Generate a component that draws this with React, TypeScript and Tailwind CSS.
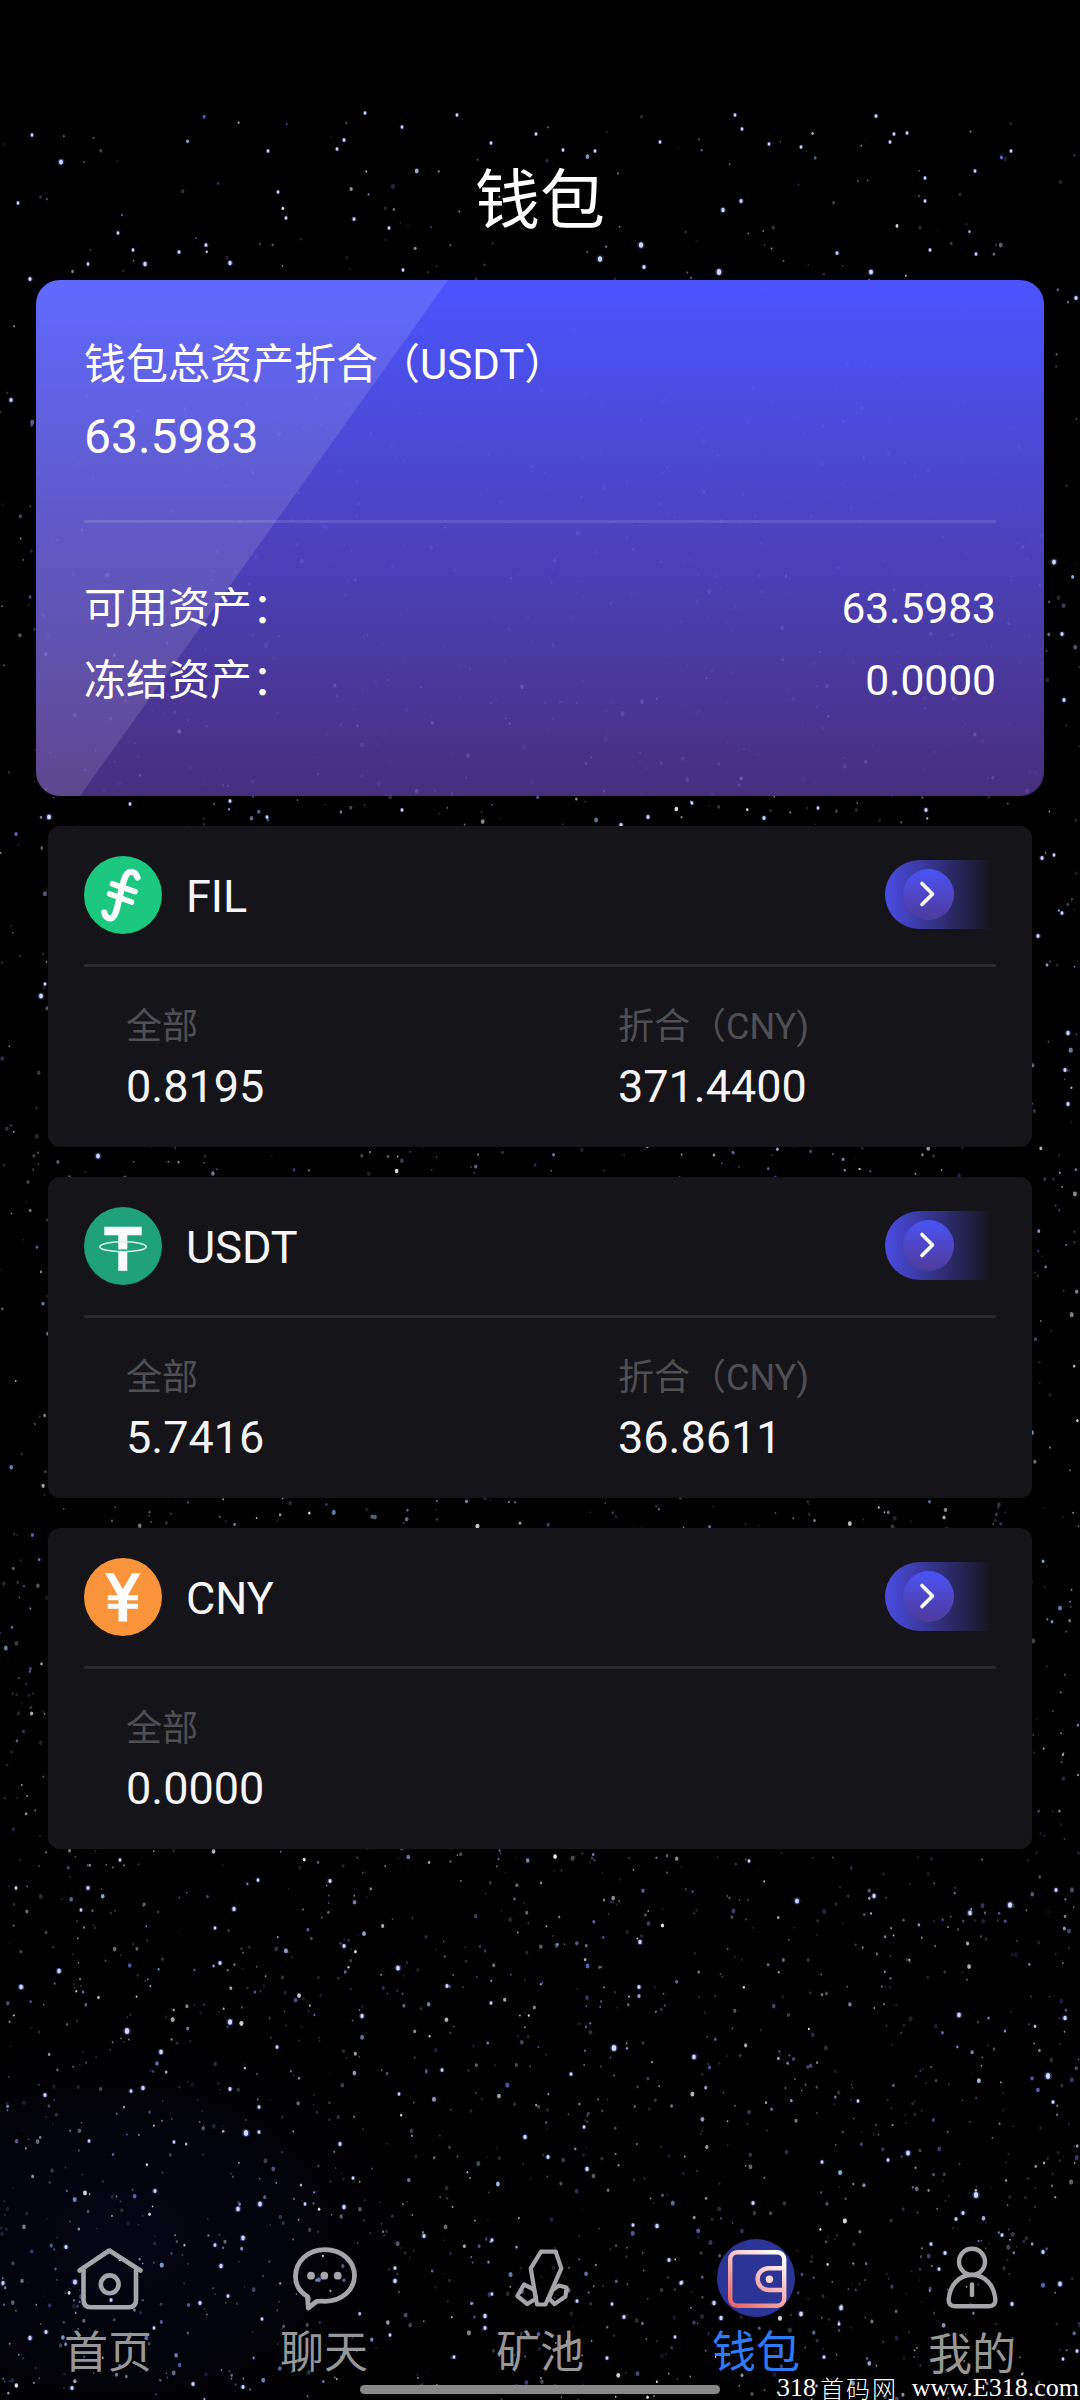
import type { ReactNode } from "react";
import { clsx } from "clsx";

interface Coin {
  id: string;
  icon: ReactNode;
  total: string;
  converted?: string;
}

interface Tab {
  label: string;
  icon: ReactNode;
  active?: boolean;
  labelClass?: string;
}

/* ---------- Star field ---------- */

// Hand-placed bright stars: x, y, radius
const BRIGHT_STARS: [number, number, number][] = [
  [61, 162, 3], [365, 113, 2], [457, 115, 2], [402, 127, 2], [344, 140, 2.2], [536, 134, 2],
  [268, 151, 2], [337, 149, 2], [491, 143, 2], [563, 150, 2], [595, 151, 2], [660, 142, 2],
  [735, 115, 2], [742, 129, 2], [769, 144, 2], [801, 147, 2], [894, 134, 2], [907, 133, 2],
  [890, 142, 2], [876, 116, 2.2], [1011, 151, 2], [925, 178, 2], [925, 201, 2], [975, 171, 2],
  [741, 201, 2.4], [723, 210, 2.6], [641, 245, 3.2], [600, 259, 3.2], [719, 272, 3.4], [871, 272, 3],
  [644, 267, 2.4], [837, 253, 2.2], [976, 254, 2], [930, 250, 2], [179, 252, 2.2], [145, 264, 2.6],
  [206, 245, 2.2], [230, 263, 2.6], [133, 250, 2], [403, 270, 2], [354, 219, 2.2], [389, 228, 2],
  [286, 218, 2], [278, 192, 2], [18, 203, 2], [32, 135, 2], [88, 264, 2], [118, 233, 2],
  [30, 279, 2.4], [1076, 298, 2.4], [11, 400, 2.4], [1054, 562, 3], [1062, 634, 2.4], [1064, 700, 2.4],
  [49, 817, 3], [267, 817, 2], [402, 810, 2], [621, 825, 2.4], [648, 817, 2.4], [764, 818, 2.4],
  [230, 801, 2.2], [130, 804, 2], [692, 803, 2], [926, 810, 2.4], [818, 808, 2],
  [1042, 858, 2.4], [1054, 855, 2], [1038, 936, 2.4], [1062, 913, 2.2], [1068, 1033, 2.6],
  [1065, 1070, 2.4], [1068, 1104, 2.4], [41, 996, 3], [45, 984, 2], [98, 1156, 3],
  [120, 1860, 2], [330, 1881, 2.4], [258, 1880, 2.2], [88, 1888, 2.4], [16, 1888, 2], [749, 1861, 2],
  [797, 1901, 3], [874, 1896, 2.6], [1010, 1905, 3.2], [970, 1913, 2.8], [1056, 1890, 2.4],
  [234, 1909, 2.6], [81, 1910, 2], [215, 1928, 2], [344, 1946, 2.4], [398, 1968, 3], [220, 1963, 2.4],
  [59, 1971, 2.8], [21, 1987, 2.8], [447, 1986, 2.4], [640, 1942, 2.6], [639, 1987, 2.4],
  [230, 2022, 3.2], [127, 2031, 3.4], [362, 2016, 2.6], [491, 2003, 2], [959, 2015, 2.8],
  [1065, 2018, 2.6], [614, 2048, 3.6], [694, 2057, 2.8], [161, 2052, 2.8], [277, 2047, 2.2],
  [1048, 2076, 3.4], [442, 2070, 2.2], [571, 2074, 2.2], [143, 2088, 2.6], [131, 2091, 2.2],
  [230, 2089, 2.4], [45, 2095, 2.4], [399, 2094, 2], [858, 2101, 2], [1053, 2102, 2.2],
  [259, 2107, 2.2], [246, 2133, 3.4], [259, 2132, 2.2], [525, 2137, 2.6], [584, 2127, 2],
  [89, 2141, 2], [174, 2142, 2], [340, 2144, 2.4], [548, 2157, 2.4], [908, 2153, 3],
  [587, 2169, 2.6], [888, 2160, 2.2], [822, 2162, 2.2], [353, 2178, 2], [155, 2191, 2.4],
  [238, 2209, 2.8], [260, 2204, 3], [344, 2207, 2.6], [976, 2195, 3.4], [753, 2203, 2.4],
  [305, 2204, 2], [963, 2213, 2.4], [633, 2225, 2.2], [956, 2219, 2.2], [243, 2238, 2.8],
  [424, 2236, 2.4], [492, 2240, 2.2], [66, 2247, 2.4],
  [3, 2283, 2.4], [75, 2282, 3], [215, 2245, 2.2], [221, 2266, 2.6],
  [200, 2303, 2.4], [228, 2296, 2.2], [30, 2338, 2.6], [46, 2332, 2.4], [111, 2300, 2.2],
  [72, 2388, 2.4], [193, 2384, 2.4], [243, 2387, 2.4], [154, 2328, 2], [390, 2335, 2],
  [395, 2281, 2.6], [395, 2268, 2.2], [262, 2319, 2], [485, 2316, 2.6], [485, 2328, 2.4],
  [492, 2294, 2], [454, 2357, 2.2], [624, 2317, 2.4], [612, 2304, 2], [577, 2301, 2.2],
  [681, 2283, 2.4], [714, 2303, 2.6], [721, 2318, 2.6], [607, 2358, 2.2], [675, 2337, 2],
  [657, 2226, 2.6], [669, 2260, 2.4], [841, 2308, 2.8], [801, 2314, 2.8], [931, 2244, 2.2],
  [945, 2253, 2.4], [1060, 2284, 2.8], [1043, 2252, 2.4], [1002, 2235, 2.2], [1012, 2304, 2.4],
  [824, 2357, 2.2], [839, 2324, 2], [1077, 2351, 2.2], [939, 2269, 2.2], [1063, 2359, 2],
];

const STAR_TINTS = ["#ffffff", "#b9c6ff", "#8fa4f0", "#9cc9ff", "#c9c9d6", "#6a6fd8"];

// Small deterministic generator so the sky is the same on every render
const makeRandom = (seed: number) => () => {
  seed = (seed * 1664525 + 1013904223) % 4294967296;
  return seed / 4294967296;
};

const random = makeRandom(318);

const DUST = Array.from({ length: 4400 }, () => {
  const depth = random();
  return {
    x: random() * 1080,
    y: 112 + Math.pow(depth, 0.72) * 2288,
    r: 0.8 + Math.pow(random(), 2.4) * 1.3,
    tint: STAR_TINTS[Math.floor(random() * STAR_TINTS.length)],
    opacity: 0.16 + Math.pow(random(), 1.6) * 0.75,
  };
});

const StarField = () => (
  <svg className="absolute inset-0 h-full w-full" viewBox="0 0 1080 2400" aria-hidden="true">
    <defs>
      <radialGradient id="haze">
        <stop offset="0" stopColor="#0a0a2c" stopOpacity="0.5" />
        <stop offset="1" stopColor="#0a0a2c" stopOpacity="0" />
      </radialGradient>
    </defs>
    <ellipse cx="120" cy="2240" rx="300" ry="220" fill="url(#haze)" />
    {DUST.map((star, i) => (
      <ellipse
        key={i}
        cx={star.x}
        cy={star.y}
        rx={star.r}
        ry={star.r * 1.25}
        fill={star.tint}
        opacity={star.opacity}
      />
    ))}
    {BRIGHT_STARS.map(([x, y, r], i) => (
      <g key={i}>
        <circle cx={x} cy={y} r={r * 1.15} fill="#5a6fe0" opacity="0.4" />
        <ellipse cx={x} cy={y} rx={r * 0.65} ry={r * 0.85} fill="#e6ebff" opacity="0.9" />
      </g>
    ))}
  </svg>
);

/* ---------- Coin icons ---------- */

const FilIcon = () => (
  <svg className="size-[78px]" viewBox="0 0 78 78" fill="none">
    <circle cx="39" cy="39" r="39" fill="#1cc780" />
    <g stroke="#fff" strokeLinecap="round">
      <path d="M53.5 21.5C52.5 17.5 49.5 15.6 46 16C41 17 39.5 25 36.3 38.5C33.5 51.5 31.5 61 27.3 62.3C24 63.2 20.8 60.5 20.3 56.5" strokeWidth="6.2" />
      <path d="M28.500 28L51 35.700M25.500 37.800L47.500 46" strokeWidth="5.600" />
    </g>
  </svg>
);

const UsdtIcon = () => (
  <svg className="size-[78px]" viewBox="0 0 78 78" fill="none">
    <circle cx="39" cy="39" r="39" fill="#1fa27a" />
    <path d="M20.3 24H57.7" stroke="#fff" strokeWidth="8.6" />
    <path d="M38.8 24V63.8" stroke="#fff" strokeWidth="9" />
    <path d="M34 43.2H43.6" stroke="#1fa27a" strokeWidth="1.6" />
    <ellipse cx="39" cy="39.8" rx="23.2" ry="5" stroke="#d8f3e8" strokeWidth="1.6" />
  </svg>
);

const CnyIcon = () => (
  <svg className="size-[78px]" viewBox="0 0 78 78" fill="none">
    <defs>
      <clipPath id="yen">
        <rect y="15.2" width="78" height="48.4" />
      </clipPath>
    </defs>
    <circle cx="39" cy="39" r="39" fill="#f9943b" />
    <g stroke="#fff" clipPath="url(#yen)">
      <path d="M22.500 10L38.800 38.500L55.300 10" strokeWidth="7.400" />
      <path d="M38.800 36V66" strokeWidth="8.600" />
      <path d="M23.700 39.800H54M23.700 48.200H54" strokeWidth="5" />
    </g>
  </svg>
);

/* ---------- Tab icons ---------- */

const HomeIcon = () => (
  <svg className="size-[78px]" viewBox="0 0 78 78" fill="none" stroke="currentColor" strokeWidth="4.6" strokeLinecap="round" strokeLinejoin="round">
    <path d="M10.5 31.5L40.3 11.500L71.5 31.5" />
    <path d="M14.5 31V61Q14.5 68.3 22 68.3H59.5Q67 68.3 67 61V31" />
    <circle cx="40.7" cy="45.3" r="8.9" />
  </svg>
);

const ChatIcon = () => (
  <svg className="size-[78px]" viewBox="0 0 78 78" fill="none" stroke="currentColor" strokeWidth="4.8" strokeLinejoin="round">
    <path d="M22.5 57.5C15 53 10.5 46 10.5 37.5C10.5 22 23.5 10.6 40 10.6C56.5 10.6 69.5 22 69.5 36.5C69.5 51.5 56 62.3 40 62.3C37 62.3 34 61.6 31.5 62.5L23.3 69Z" />
    <g fill="currentColor" stroke="none">
      <circle cx="26" cy="36.7" r="3.9" />
      <circle cx="39.3" cy="36.7" r="3.9" />
      <circle cx="52.7" cy="36.7" r="3.9" />
    </g>
  </svg>
);

const MineIcon = () => (
  <svg className="size-[78px]" viewBox="0 0 78 78" fill="none" stroke="currentColor" strokeWidth="4.2" strokeLinejoin="round">
    <path d="M40 12.7H54.7L60.3 29.3L44.5 65.500H36L29.7 29.3Z" />
    <path d="M23 45.5L33 50.5L35 59.5L26.3 65L16.3 57Z" />
    <path d="M58 46.5L65.5 48.5L64.5 57.5L53.5 65L48 59.5L51.5 51Z" />
  </svg>
);

const WalletIcon = () => (
  <svg className="size-[78px]" viewBox="0 0 78 78" fill="none">
    <defs>
      <linearGradient id="wallet" gradientUnits="userSpaceOnUse" x1="58" y1="12" x2="20" y2="68">
        <stop offset="0" stopColor="#ffffff" />
        <stop offset="1" stopColor="#ea6766" />
      </linearGradient>
    </defs>
    <circle cx="39" cy="39" r="39" fill="#2c3597" />
    <g stroke="url(#wallet)" strokeWidth="4.4">
      <rect x="13.2" y="13.2" width="54" height="53.6" rx="7" />
      <path d="M67 29.2H51.5A10.9 10.9 0 0 0 51.5 51H67" />
    </g>
    <circle cx="52.4" cy="40.2" r="3.7" fill="#fbd5d3" />
  </svg>
);

const PersonIcon = () => (
  <svg className="size-[78px]" viewBox="0 0 78 78" fill="none" stroke="currentColor" strokeWidth="4.4" strokeLinecap="round" strokeLinejoin="round">
    <circle cx="39" cy="22.8" r="13" />
    <path d="M22 67.2Q15.6 67.2 15.6 60.5C17 45.5 26.5 36 39 36C51.5 36 61 45.5 62.4 60.5Q62.4 67.2 56 67.2Z" />
    <path d="M39 45.5V56" />
  </svg>
);

/* ---------- Data ---------- */

const COINS: Coin[] = [
  { id: "FIL", icon: <FilIcon />, total: "0.8195", converted: "371.4400" },
  { id: "USDT", icon: <UsdtIcon />, total: "5.7416", converted: "36.8611" },
  { id: "CNY", icon: <CnyIcon />, total: "0.0000" },
];

const TABS: Tab[] = [
  { label: "首页", icon: <HomeIcon /> },
  { label: "聊天", icon: <ChatIcon /> },
  { label: "矿池", icon: <MineIcon /> },
  { label: "钱包", icon: <WalletIcon />, active: true },
  { label: "我的", icon: <PersonIcon />, labelClass: "pt-0.5" },
];

/* ---------- Sections ---------- */

const AssetRow = ({ label, value }: { label: string; value: string }) => (
  <div className="flex h-[72px] items-center justify-between">
    <span>{label}</span>
    <span className="text-[42.5px]">{value}</span>
  </div>
);

const BalanceCard = () => (
  <section className="relative mx-9 h-[516px] overflow-hidden rounded-3xl bg-linear-to-b from-[#4a54ff] to-[rgba(87,57,154,0.82)] px-12 pt-[49px] text-[42px] leading-[72px] text-white">
    {/* Diagonal sheen */}
    <div className="absolute inset-0 bg-white/12 [clip-path:polygon(0_0,412px_0,44px_100%,0_100%)]" />
    <div className="relative">
      <p className="h-[72px]">钱包总资产折合（USDT）</p>
      <p className="h-[72px] text-5xl leading-[72px]">63.5983</p>
      <div className="mt-[47px] mb-[50px] h-[3px] bg-white/12" />
      <AssetRow label="可用资产：" value="63.5983" />
      <AssetRow label="冻结资产：" value="0.0000" />
    </div>
  </section>
);

const Amount = ({ label, value }: { label: string; value: string }) => (
  <div>
    <p className="h-[60px] text-4xl leading-[60px] text-[#505053]">{label}</p>
    <p className="h-[60px] text-[45px] leading-[60px] text-[#f5f5f7]">{value}</p>
  </div>
);

const MoreButton = () => (
  <button
    aria-label="more"
    className="flex h-[69px] w-[108px] items-center rounded-l-full bg-linear-to-r from-[#4b4ce4] to-[#4b2f80]/0 pl-[18px]"
  >
    <span className="flex size-[51px] items-center justify-center rounded-full bg-linear-to-b from-[#4a52f5] to-[#4e3a9c]">
      <svg className="size-[30px]" viewBox="0 0 30 30" fill="none" stroke="#fff" strokeWidth="3.6" strokeLinecap="round" strokeLinejoin="round">
        <path d="M8 3.500L18.500 14L8 24.500" />
      </svg>
    </span>
  </button>
);

const CoinCard = ({ coin }: { coin: Coin }) => (
  <section className="mx-12 h-[321px] rounded-xl bg-[#151419] px-9">
    <div className="flex h-[138px] items-center">
      {coin.icon}
      <h2 className="mt-[3px] ml-6 flex-1 text-[45px] leading-[60px] text-[#f5f5f7]">{coin.id}</h2>
      <div className="-mt-px mr-[3px]">
        <MoreButton />
      </div>
    </div>
    <div className="h-[3px] bg-[#2a2a2d]" />
    <div className="grid grid-cols-[492px_1fr] pt-[30px] pl-[42px]">
      <Amount label="全部" value={coin.total} />
      {coin.converted && <Amount label="折合（CNY)" value={coin.converted} />}
    </div>
  </section>
);

const TabBar = () => (
  <nav className="absolute inset-x-0 bottom-0 grid h-[161px] grid-cols-5">
    {TABS.map((tab) => (
      <a key={tab.label} className="flex flex-col items-center text-[#a5a5aa]">
        {tab.icon}
        <span
          className={clsx(
            "mt-[13px] text-[44px] leading-[46px]",
            tab.active ? "text-[#2f7bf5]" : "text-[#979797]",
            tab.labelClass
          )}
        >
          {tab.label}
        </span>
      </a>
    ))}
  </nav>
);

const Credit = () => (
  <div className="absolute right-0 bottom-0 flex h-[25px] w-[303px] items-center font-['Liberation_Serif','Noto_Sans_CJK_SC',serif] text-[26px] leading-[25px] whitespace-nowrap text-white">
    <span>318</span>
    <span className="ml-1 font-['Noto_Sans_CJK_SC',sans-serif] text-2xl leading-[25px] font-light tracking-[2px]">首码网</span>
    <span className="ml-auto pr-px">www.E318.com</span>
  </div>
);

export default function App() {
  return (
    <main className="relative h-[2400px] w-[1080px] overflow-hidden bg-black font-[Roboto,'Noto_Sans_CJK_SC',sans-serif]">
      <StarField />
      <div className="relative">
        <header className="flex h-[280px] items-center justify-center pt-[122px]">
          <h1 className="text-[65px] leading-[80px] text-white">钱包</h1>
        </header>
        <BalanceCard />
        <div className="mt-[30px] flex flex-col gap-[30px]">
          {COINS.map((coin) => (
            <CoinCard key={coin.id} coin={coin} />
          ))}
        </div>
      </div>
      <TabBar />
      <div className="absolute bottom-1.5 left-[360px] h-[9px] w-[360px] rounded-full bg-[#888888]" />
      <Credit />
    </main>
  );
}
